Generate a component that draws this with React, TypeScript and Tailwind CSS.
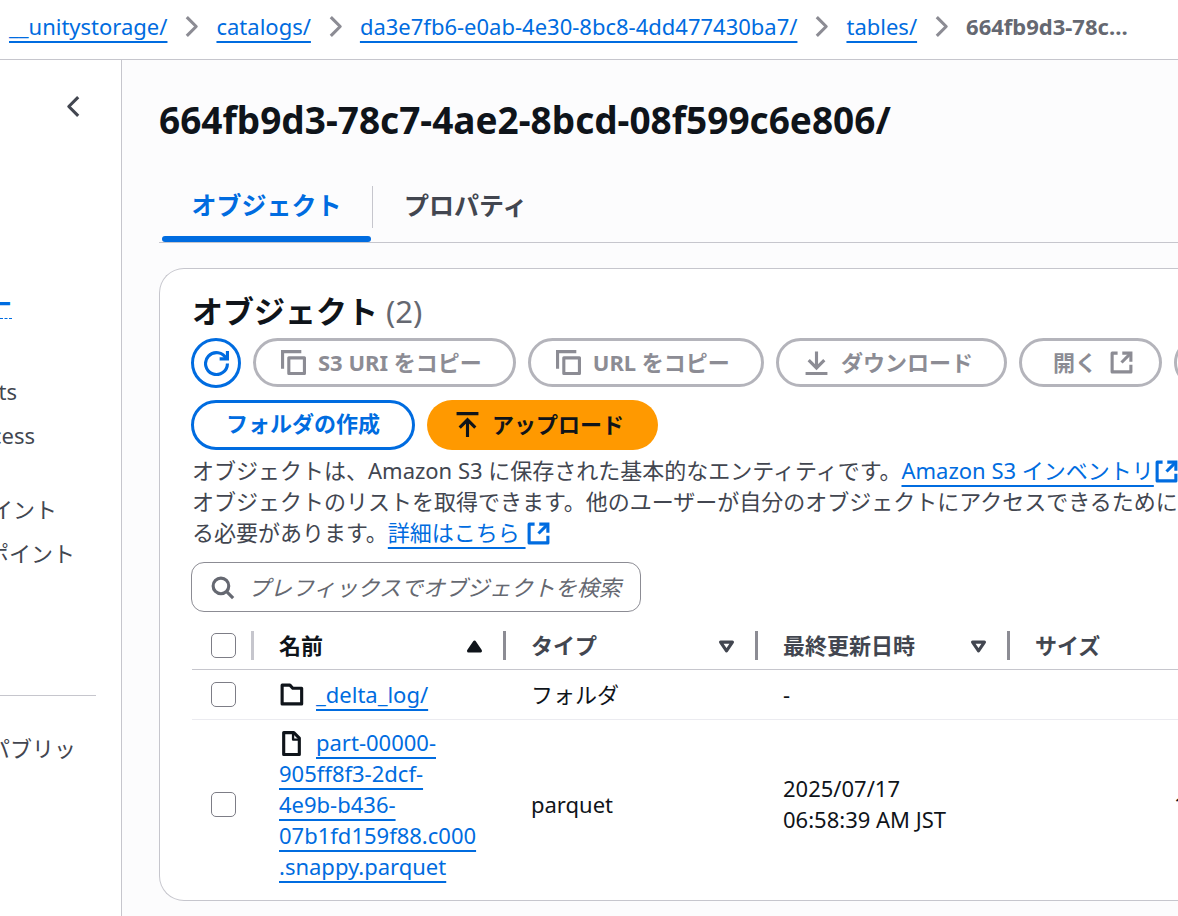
import type { ReactNode } from "react";

const linkClass =
  "text-[#006ce0] underline decoration-2 underline-offset-[6px] [text-decoration-skip-ink:none]";

function Icon({ children, className = "" }: { children: ReactNode; className?: string }) {
  return (
    <svg
      viewBox="0 0 16 16"
      className={`size-[25px] shrink-0 ${className}`}
      fill="none"
      stroke="currentColor"
      strokeWidth="2"
      strokeLinejoin="round"
      aria-hidden="true"
    >
      {children}
    </svg>
  );
}

const CopyIcon = () => (
  <Icon>
    <path d="M15 5H5v10h10V5Z" />
    <path d="M1 12V1h12" strokeLinejoin="miter" />
  </Icon>
);

const ExternalIcon = ({ className = "" }: { className?: string }) => (
  <Icon className={className}>
    <path d="M8.5 2H14v5.5" strokeLinejoin="miter" />
    <path d="m8 8 6-6" />
    <path d="M14 9.5V14H2V2h3.5" />
  </Icon>
);

function DisabledButton({
  children,
  label,
  iconEnd = false,
}: {
  children?: ReactNode;
  label?: string;
  iconEnd?: boolean;
}) {
  return (
    <button
      type="button"
      disabled
      aria-label={label}
      className={`flex h-[49px] shrink-0 items-center gap-3 rounded-full border-3 border-[#b4b4bb] font-bold text-[#8c8c94] ${
        iconEnd ? "pr-[25px] pl-[31px]" : "pr-[31px] pl-[25px]"
      }`}
    >
      {children}
    </button>
  );
}

const crumbs = ["__unitystorage/", "catalogs/", "da3e7fb6-e0ab-4e30-8bc8-4dd477430ba7/", "tables/"];

function Breadcrumbs() {
  return (
    <nav
      aria-label="Breadcrumb"
      className="flex h-[60px] items-center overflow-hidden border-b border-[#c6c6cd] bg-white pb-[7px] pl-[9px] whitespace-nowrap"
    >
      {crumbs.map((crumb) => (
        <span key={crumb} className="flex items-center">
          <a href="#" className={linkClass}>
            {crumb}
          </a>
          <Icon className="mx-3 text-[#8c8c94]">
            <path d="m5 2 6 6-6 6" />
          </Icon>
        </span>
      ))}
      <span className="font-bold text-[#656871]">664fb9d3-78c…</span>
    </nav>
  );
}

function Sidebar() {
  return (
    <aside className="w-[122px] shrink-0 overflow-hidden border-r border-[#c6c6cd] bg-white text-[#424650]">
      <button type="button" aria-label="Close navigation" className="mt-[34px] ml-[61px] block">
        <Icon>
          <path d="M11 2 5 8l6 6" />
        </Icon>
      </button>
      <a
        href="#"
        className="mt-[169px] flex h-[31px] w-3 justify-end overflow-hidden border-b border-dashed border-[#006ce0] font-bold text-[#006ce0]"
      >
        ー
      </a>
      <ul className="mt-[57px] whitespace-nowrap">
        <li className="flex h-11 w-[17px] justify-end overflow-hidden">ts</li>
        <li className="flex h-[74px] w-[35px] justify-end overflow-hidden">cess</li>
        <li className="flex h-11 w-[57px] justify-end overflow-hidden">イント</li>
        <li className="flex h-11 w-[75px] justify-end overflow-hidden">ポイント</li>
      </ul>
      <hr className="mt-[113px] mr-[25px] border-[#c6c6cd]" />
      <p className="mt-[37px] flex w-[76px] justify-end overflow-hidden whitespace-nowrap">パブリッ</p>
    </aside>
  );
}

function Tabs() {
  return (
    <div role="tablist" className="mt-[39px] flex h-[61px] border-b border-[#c6c6cd] text-[25px] leading-[31px] font-bold">
      <button
        type="button"
        role="tab"
        aria-selected="true"
        className="relative ml-[3px] w-[209px] pb-[13px] text-[#006ce0]"
      >
        オブジェクト
        <span className="absolute inset-x-0 bottom-0 h-[6px] rounded-full bg-[#006ce0]" />
      </button>
      <button type="button" role="tab" aria-selected="false" className="flex pl-px text-[#424650]">
        <span className="mt-1 h-[42px] border-l border-[#c6c6cd] pt-1 pl-[31px]">プロパティ</span>
      </button>
    </div>
  );
}

function Checkbox({ label }: { label: string }) {
  return (
    <input
      type="checkbox"
      aria-label={label}
      className="block size-[25px] shrink-0 appearance-none rounded-[5px] border border-[#7d7d86] bg-white"
    />
  );
}

const Divider = ({ className = "bg-[#8c8c94]" }: { className?: string }) => (
  <span className={`h-[29px] w-[3px] shrink-0 ${className}`} />
);

function SortableHeader({ label, active = false }: { label: string; active?: boolean }) {
  return (
    <th scope="col" className={`p-0 pt-[2px] ${active ? "text-[#0f141a]" : "text-[#424650]"}`}>
      <div className="flex items-center pl-[25px]">
        <span className="grow text-left">{label}</span>
        <button type="button" aria-label={label} className="mr-4">
          <Icon>
            {active ? (
              <path d="m8 5.8 3.8 5.7H4.2L8 5.8Z" fill="currentColor" />
            ) : (
              <path d="M8 11.5 4.2 5.8h7.6L8 11.5Z" />
            )}
          </Icon>
        </button>
        <Divider />
      </div>
    </th>
  );
}

function ObjectsTable() {
  return (
    <table className="mt-[9px] w-full min-w-[1100px] table-fixed border-collapse text-[#0f141a]">
      <colgroup>
        <col className="w-[62px]" />
        <col className="w-[252px]" />
        <col className="w-[252px]" />
        <col className="w-[252px]" />
        <col />
      </colgroup>
      <thead>
        <tr className="h-12 border-b border-[#c6c6cd]">
          <th scope="col" className="p-0 pt-[2px]">
            <div className="flex items-center justify-between pl-[19px]">
              <Checkbox label="すべて選択" />
              <Divider className="bg-[#c6c6cd]" />
            </div>
          </th>
          <SortableHeader label="名前" active />
          <SortableHeader label="タイプ" />
          <SortableHeader label="最終更新日時" />
          <th scope="col" className="p-0 pt-[2px] pl-[25px] text-left text-[#424650]">
            サイズ
          </th>
        </tr>
      </thead>
      <tbody>
        <tr className="h-[50px] border-b border-[#ebebf0]">
          <td className="p-0 pl-[19px]">
            <Checkbox label="_delta_log/" />
          </td>
          <td className="p-0 pl-[25px]">
            <div className="flex items-center gap-3">
              <Icon>
                <path d="M14.5 4H8.8L7 2H2v12h12.5V4Z" />
              </Icon>
              <a href="#" className={linkClass}>
                _delta_log/
              </a>
            </div>
          </td>
          <td className="p-0 pl-[25px]">フォルダ</td>
          <td className="p-0 pl-[25px]">-</td>
          <td />
        </tr>
        <tr>
          <td className="p-0 pl-[19px]">
            <Checkbox label="part-00000" />
          </td>
          <td className="pt-[7px] pb-[7px] pl-[25px]">
            <Icon className="mr-3 inline align-[-5px]">
              <path d="M3 1h6.5L13 4.5V15H3V1Z" />
              <path d="M9 1v4.5h4" strokeWidth="1.5" />
            </Icon>
            <a href="#" className={linkClass}>
              part-00000-
              <br />
              905ff8f3-2dcf-
              <br />
              4e9b-b436-
              <br />
              07b1fd159f88.c000
              <br />
              .snappy.parquet
            </a>
          </td>
          <td className="p-0 pl-[25px]">parquet</td>
          <td className="p-0 pl-[25px]">
            2025/07/17
            <br />
            06:58:39 AM JST
          </td>
          <td className="p-0 pl-[164px]">1</td>
        </tr>
      </tbody>
    </table>
  );
}

function ObjectsCard() {
  return (
    <section className="mt-[25px] overflow-hidden rounded-l-[25px] border border-r-0 border-[#c6c6cd] bg-white pt-[23px] pb-[11px] pl-8">
      <h2 className="text-[31px] leading-[38px] font-bold text-[#0f141a]">
        オブジェクト <span className="font-normal text-[#656871]">(2)</span>
      </h2>
      <div className="mt-2 -ml-px flex gap-3 whitespace-nowrap">
        <button
          type="button"
          aria-label="更新"
          className="flex size-[50px] shrink-0 items-center justify-center rounded-full border-3 border-[#006ce0] text-[#006ce0]"
        >
          <Icon>
            <path d="M10 5h5V0" strokeLinejoin="miter" />
            <path d="M15 8a7 7 0 1 1-.7-3" />
          </Icon>
        </button>
        <DisabledButton>
          <CopyIcon />
          S3 URI をコピー
        </DisabledButton>
        <DisabledButton>
          <CopyIcon />
          URL をコピー
        </DisabledButton>
        <DisabledButton>
          <Icon>
            <path d="M8 1v10M3 6.5l5 5 5-5M1 15h14" strokeLinejoin="miter" />
          </Icon>
          ダウンロード
        </DisabledButton>
        <DisabledButton iconEnd>
          開く
          <ExternalIcon />
        </DisabledButton>
        <DisabledButton label="削除" />
      </div>
      <div className="mt-3 -ml-px flex gap-3 font-bold">
        <button type="button" className="h-[50px] rounded-full border-3 border-[#006ce0] px-8 pb-1 text-[#006ce0]">
          フォルダの作成
        </button>
        <button
          type="button"
          className="flex h-[50px] items-center gap-3 rounded-full bg-[#ff9900] pr-[34px] pb-[2px] pl-7 text-[#0f141a]"
        >
          <Icon>
            <path d="M1 1h14M8 16V5M3 10l5-5 5 5" strokeLinejoin="miter" />
          </Icon>
          アップロード
        </button>
      </div>
      <p className="mt-[5px] whitespace-nowrap text-[#424650]">
        オブジェクトは、Amazon S3 に保存された基本的なエンティティです。
        <a href="#" className={linkClass}>
          Amazon S3 インベントリ
          <ExternalIcon className="inline align-[-5px]" />
        </a>
        を
        <br />
        オブジェクトのリストを取得できます。他のユーザーが自分のオブジェクトにアクセスできるためには
        <br />
        る必要があります。
        <a href="#" className={linkClass}>
          詳細はこちら <ExternalIcon className="inline align-[-5px]" />
        </a>
      </p>
      <label className="mt-[14px] -ml-px flex h-[50px] w-[450px] items-center gap-[13px] rounded-[13px] border border-[#8c8c94] pr-2 pl-[18px] text-[#656871]">
        <Icon>
          <circle cx="7" cy="7" r="5" />
          <path d="m10.5 10.5 4.3 4.3" />
        </Icon>
        <input
          type="text"
          aria-label="オブジェクトを検索"
          placeholder="プレフィックスでオブジェクトを検索"
          className="min-w-0 grow italic outline-none placeholder:text-[#656871]"
        />
      </label>
      <ObjectsTable />
    </section>
  );
}

export default function App() {
  return (
    <div className="flex min-h-screen flex-col overflow-hidden bg-[#fcfcfd] font-['Noto_Sans','Noto_Sans_CJK_JP',sans-serif] text-[22px] leading-[31px]">
      <Breadcrumbs />
      <div className="flex grow">
        <Sidebar />
        <main className="min-w-0 grow overflow-hidden pt-[37px] pb-[15px] pl-[37px]">
          <h1 className="text-[37px] leading-[46px] font-bold text-[#0f141a]">664fb9d3-78c7-4ae2-8bcd-08f599c6e806/</h1>
          <Tabs />
          <ObjectsCard />
        </main>
      </div>
    </div>
  );
}
